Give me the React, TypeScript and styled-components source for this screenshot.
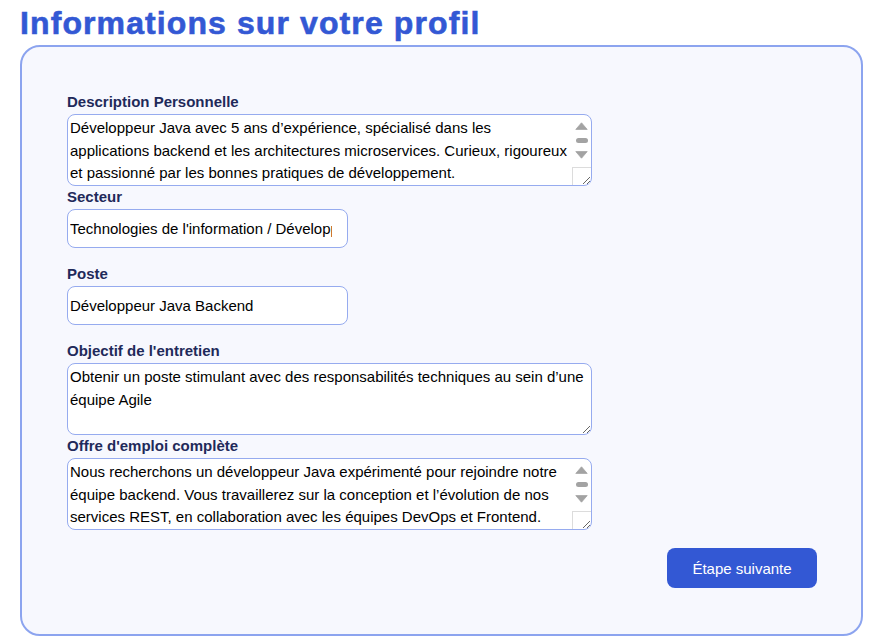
import React from "react";
import styled, { createGlobalStyle } from "styled-components";

const GlobalStyle = createGlobalStyle`
  html, body {
    margin: 0;
    padding: 0;
    background: #ffffff;
    font-family: "Liberation Sans", Arial, sans-serif;
  }
`;

const Page = styled.main`
  padding: 5px 0 0 20px;
`;

const Title = styled.h1`
  margin: 0 0 3px 0;
  font-family: "Liberation Sans", Arial, sans-serif;
  font-size: 32px;
  line-height: 37px;
  font-weight: 700;
  letter-spacing: 1.1px;
  color: #3358d4;
  -webkit-text-stroke: 0.6px #3358d4;
`;

const Card = styled.section`
  box-sizing: border-box;
  width: 843px;
  border: 2px solid #8ca4ef;
  border-radius: 20px;
  background: #f7f8fe;
  padding: 47px 44px 46px 45px;
  display: flex;
  flex-direction: column;
`;

const Field = styled.div<{ $after: number }>`
  display: flex;
  flex-direction: column;
  align-items: flex-start;
  margin-bottom: ${(p) => p.$after}px;
`;

const Label = styled.label`
  display: block;
  font-size: 15px;
  line-height: 16px;
  font-weight: 700;
  color: #1f2a5a;
  margin-bottom: 4px;
`;

const AreaWrap = styled.div`
  position: relative;
  width: 525px;
  height: 72px;
`;

const TextArea = styled.textarea<{ $scroll?: boolean }>`
  box-sizing: border-box;
  display: block;
  width: 525px;
  height: 72px;
  padding: 2px ${(p) => (p.$scroll ? 21 : 2)}px 2px 2px;
  margin: 0;
  border: 1px solid #96abef;
  border-radius: 8px;
  background: #ffffff;
  font-family: "Liberation Sans", Arial, sans-serif;
  font-size: 15px;
  line-height: 22.5px;
  color: #000000;
  overflow: hidden;
  resize: vertical;
  outline: none;
`;

/* drawn classic scrollbar lying over the textarea's right edge */
const ScrollBar = styled.div`
  position: absolute;
  top: 1px;
  right: 1px;
  bottom: 1px;
  width: 19px;
  box-sizing: border-box;
  display: flex;
  flex-direction: column;
  align-items: center;
  padding-top: 7px;
  pointer-events: none;
`;

const Arrow = styled.svg<{ $gap: number }>`
  display: block;
  width: 13px;
  height: 8px;
  margin-top: ${(p) => p.$gap}px;
`;

const Thumb = styled.div`
  width: 12px;
  height: 5px;
  margin-top: 8px;
  border-radius: 3px;
  background: #a3a3a3;
`;

const Corner = styled.div`
  box-sizing: border-box;
  align-self: stretch;
  margin-top: auto;
  height: 18px;
  border-top: 1px solid #dcdcdc;
  border-left: 1px solid #dcdcdc;
`;

const TextInput = styled.input`
  box-sizing: border-box;
  width: 281px;
  height: 39px;
  padding: 2px 15px 2px 2px;
  margin: 0;
  border: 1px solid #96abef;
  border-radius: 8px;
  background: #ffffff;
  font-family: "Liberation Sans", Arial, sans-serif;
  font-size: 15px;
  color: #000000;
  outline: none;
`;

const Actions = styled.div`
  display: flex;
  justify-content: flex-end;
`;

const NextButton = styled.button`
  width: 150px;
  height: 40px;
  border: none;
  border-radius: 8px;
  background: #3358d4;
  color: #ffffff;
  font-family: "Liberation Sans", Arial, sans-serif;
  font-size: 15px;
  cursor: pointer;
`;

function ScrollIndicator() {
  return (
    <ScrollBar aria-hidden="true">
      <Arrow $gap={0} viewBox="0 0 13 8">
        <polygon points="6.5,0.8 12.2,7.4 0.8,7.4" fill="#a3a3a3" stroke="#a3a3a3" strokeWidth="0.8" strokeLinejoin="round" />
      </Arrow>
      <Thumb />
      <Arrow $gap={8} viewBox="0 0 13 8">
        <polygon points="0.8,0.6 12.2,0.6 6.5,7.2" fill="#a3a3a3" stroke="#a3a3a3" strokeWidth="0.8" strokeLinejoin="round" />
      </Arrow>
      <Corner />
    </ScrollBar>
  );
}

function ScrollArea({ value }: { value: string }) {
  return (
    <AreaWrap>
      <TextArea $scroll defaultValue={value} />
      <ScrollIndicator />
    </AreaWrap>
  );
}

export default function App() {
  return (
    <>
      <GlobalStyle />
      <Page>
        <Title>Informations sur votre profil</Title>
        <Card>
          <Field $after={3}>
            <Label>Description Personnelle</Label>
            <ScrollArea value="Développeur Java avec 5 ans d’expérience, spécialisé dans les applications backend et les architectures microservices. Curieux, rigoureux et passionné par les bonnes pratiques de développement." />
          </Field>
          <Field $after={18}>
            <Label>Secteur</Label>
            <TextInput defaultValue="Technologies de l'information / Développement logiciel" />
          </Field>
          <Field $after={18}>
            <Label>Poste</Label>
            <TextInput defaultValue="Développeur Java Backend" />
          </Field>
          <Field $after={3}>
            <Label>Objectif de l'entretien</Label>
            <TextArea defaultValue="Obtenir un poste stimulant avec des responsabilités techniques au sein d’une équipe Agile" />
          </Field>
          <Field $after={18}>
            <Label>Offre d'emploi complète</Label>
            <ScrollArea value="Nous recherchons un développeur Java expérimenté pour rejoindre notre équipe backend. Vous travaillerez sur la conception et l’évolution de nos services REST, en collaboration avec les équipes DevOps et Frontend." />
          </Field>
          <Actions>
            <NextButton type="button">Étape suivante</NextButton>
          </Actions>
        </Card>
      </Page>
    </>
  );
}
